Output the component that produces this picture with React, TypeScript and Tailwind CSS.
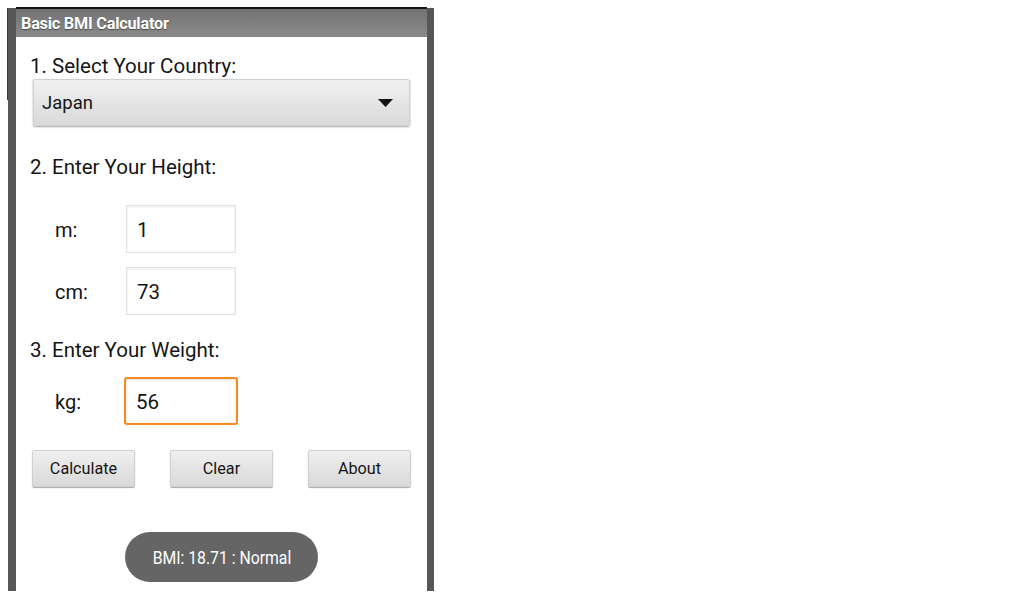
import React from "react";

const font = { fontFamily: "Roboto, 'Noto Sans', Arial, sans-serif" };

function Field({ label, value, focused }: { label: string; value: string; focused?: boolean }) {
  return (
    <div className="flex h-[48px] items-center">
      <div className="w-[110px] pl-[39px] pt-[2px] text-[20px] text-[#151515]">{label}</div>
      {focused ? (
        <div className="-ml-[2px] flex h-[48px] w-[114px] items-center rounded-[3px] border-2 border-[#f68a1e] bg-white pl-[10px] pt-[2px] text-[20.5px] text-[#151515] shadow-[inset_0_1px_3px_rgba(0,0,0,0.12)]">
          {value}
        </div>
      ) : (
        <div className="flex h-[48px] w-[110px] items-center border border-[#e2e2e2] bg-white pl-[10px] pt-[2px] text-[20.5px] text-[#151515] shadow-[inset_0_1px_3px_rgba(0,0,0,0.08)]">
          {value}
        </div>
      )}
    </div>
  );
}

function Btn({ children }: { children: React.ReactNode }) {
  return (
    <div className="flex h-[37px] w-[103px] items-center justify-center rounded-[2px] border border-[#cfcfcf] bg-gradient-to-b from-[#efefef] to-[#d9d9d9] pt-[2px] text-[16.2px] text-[#151515] shadow-[0_1px_1px_rgba(0,0,0,0.35)]">
      {children}
    </div>
  );
}

export default function App() {
  return (
    <div className="relative h-[600px] w-[1024px] overflow-hidden bg-white" style={font}>
      <div className="absolute left-[7px] top-[8px] h-[92px] w-[1px] bg-[#3a3a3a]" />
      <div className="ml-[8px] mt-[7px] flex h-[584px] w-[426px]">
        <div className="mt-[1px] w-[8px] bg-[#575757]" />
        <div className="flex w-[411px] flex-col">
          <div className="h-[2px] bg-[#141414]" />
          <div className="flex h-[28px] items-center bg-gradient-to-b from-[#737373] to-[#8a8a8a] pl-[5px] pt-[2px] text-[16.2px] font-bold tracking-[-0.2px] text-white [text-shadow:0_1px_1px_rgba(0,0,0,0.45)]">
            Basic BMI Calculator
          </div>
          <div className="flex flex-1 flex-col bg-white">
            <div className="mt-[14px] flex h-[28px] items-center pl-[14px] pt-[2px] text-[20.5px] text-[#151515]">
              1. Select Your Country:
            </div>
            <div className="ml-[17px] flex h-[47px] w-[377px] items-center justify-between rounded-[2px] border border-[#d0d0d0] bg-gradient-to-b from-[#f1f1f1] to-[#d9d9d9] pl-[8px] pr-[16px] shadow-[0_1px_2px_rgba(0,0,0,0.35)]">
              <span className="pt-[2px] text-[18.5px] text-[#151515]">Japan</span>
              <svg width="15" height="8" viewBox="0 0 15 8">
                <path d="M0 0 L15 0 L7.5 8 Z" fill="#111" />
              </svg>
            </div>
            <div className="mt-[26px] flex h-[28px] items-center pl-[14px] pt-[2px] text-[20.5px] text-[#151515]">
              2. Enter Your Height:
            </div>
            <div className="mt-[25px]">
              <Field label="m:" value="1" />
            </div>
            <div className="mt-[14px]">
              <Field label="cm:" value="73" />
            </div>
            <div className="mt-[20px] flex h-[28px] items-center pl-[14px] pt-[2px] text-[20.5px] text-[#151515]">
              3. Enter Your Weight:
            </div>
            <div className="mt-[14px]">
              <Field label="kg:" value="56" focused />
            </div>
            <div className="ml-[16px] mt-[25px] flex gap-[35px]">
              <Btn>Calculate</Btn>
              <Btn>Clear</Btn>
              <Btn>About</Btn>
            </div>
            <div className="mt-[45px] flex justify-center">
              <div className="flex h-[50px] w-[193px] items-center justify-center rounded-full bg-[#656565] pt-[2px]">
                <span className="inline-block scale-x-[0.9] text-[17.5px] text-white">BMI: 18.71 : Normal</span>
              </div>
            </div>
          </div>
        </div>
        <div className="mt-[1px] w-[7px] bg-[#575757]" />
      </div>
    </div>
  );
}
